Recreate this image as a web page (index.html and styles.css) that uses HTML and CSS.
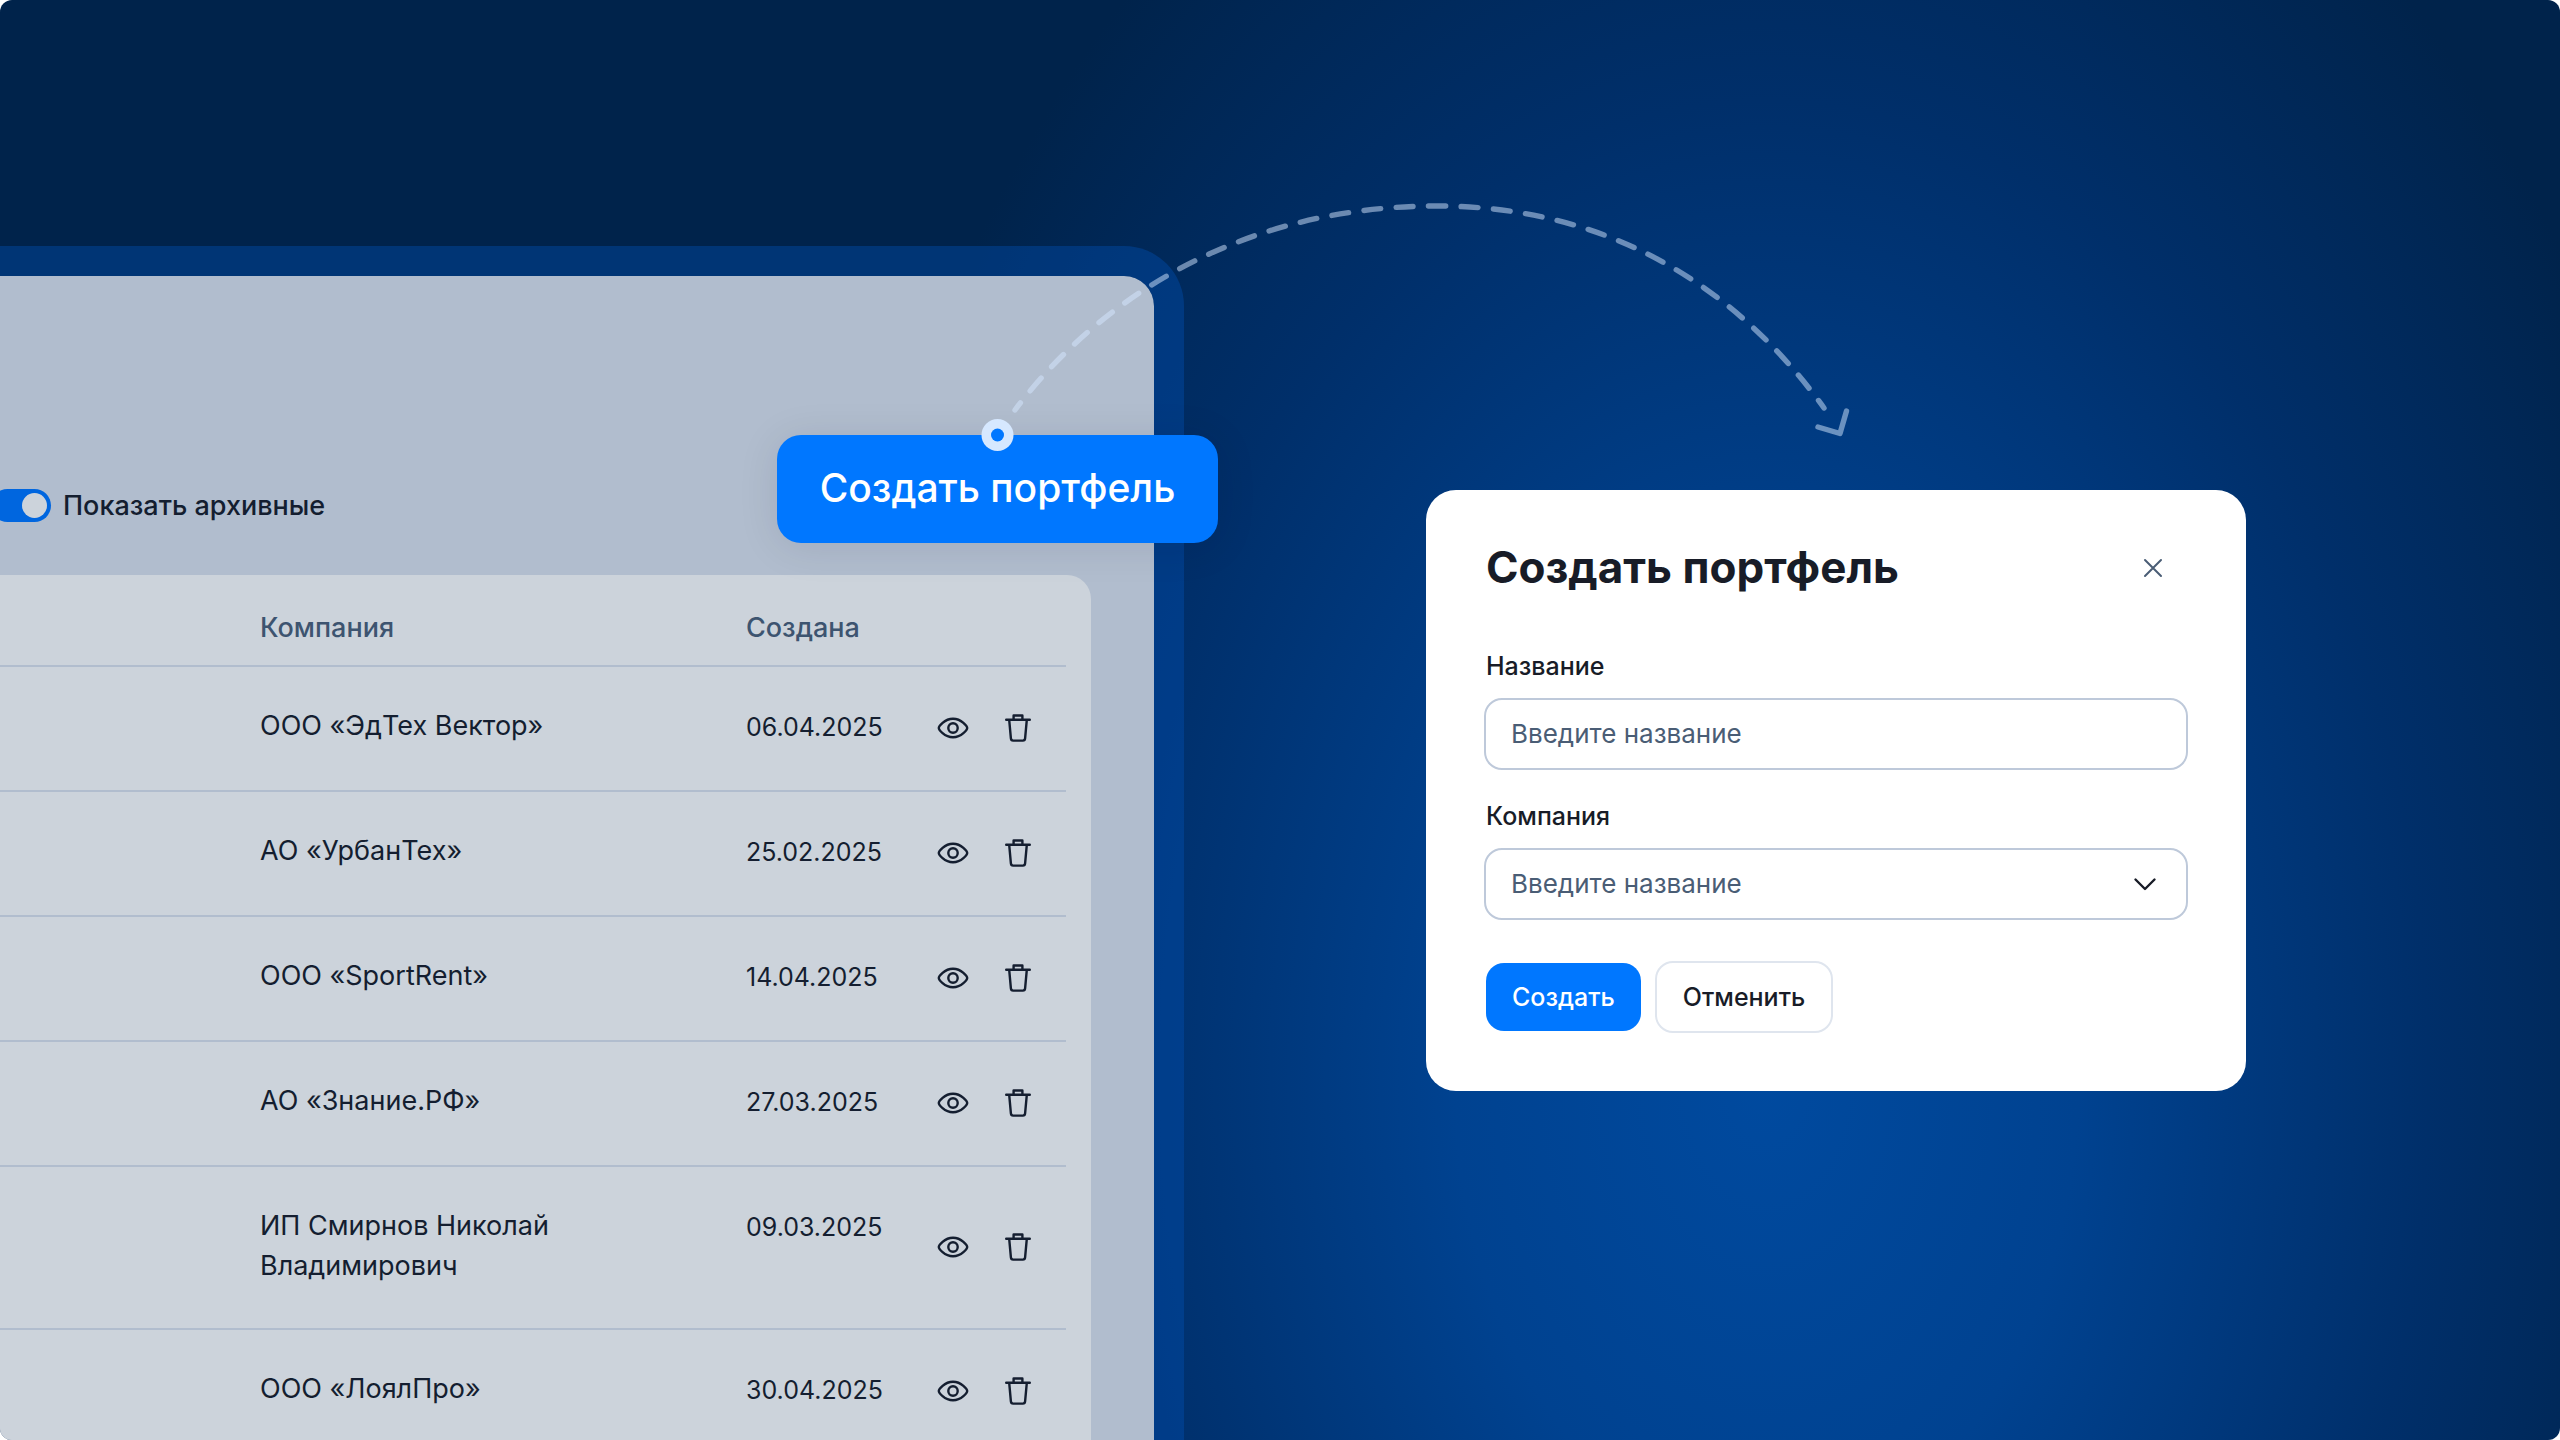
FILE: index.html
```html
<!DOCTYPE html>
<html lang="ru">
<head>
    <meta charset="UTF-8">
    <meta name="viewport" content="width=device-width, initial-scale=1.0">
    <link rel="stylesheet" href="styles.css">

    <title>Создать портфель</title>
</head>
<body>
    <svg class="sprite" aria-hidden="true">
        <symbol id="eye" viewBox="0 0 36 36">
            <path d="M3.8 18C3.8 16.6 9.2 8.7 18 8.7S32.2 16.6 32.2 18 26.8 27.3 18 27.3 3.8 19.4 3.8 18Z"/>
            <circle cx="18" cy="18" r="4.7"/>
        </symbol>
        <symbol id="trash" viewBox="0 0 36 36">
            <path d="M6.2 9.8h23.6M13.6 9.8V5.5h8.8v4.3M9.2 9.8l1.7 18.6q.2 2.2 2.2 2.2h9.8q2 0 2.2-2.2l1.7-18.6"/>
        </symbol>
    </svg>

    <main class="stage">
        <section class="panel">
            <div class="filter">
                <input type="checkbox" class="toggle" id="archived" checked>
                <label for="archived">Показать архивные</label>
            </div>

            <div class="card">
                <table>
                    <thead>
                        <tr>
                            <th></th>
                            <th class="company">Компания</th>
                            <th class="date">Создана</th>
                            <th class="actions"></th>
                        </tr>
                    </thead>
                    <tbody>
                        <tr>
                            <td></td>
                            <td>ООО «ЭдТех Вектор»</td>
                            <td class="date">06.04.2025</td>
                            <td class="actions">
                                <button class="icon" aria-label="Просмотр"><svg><use href="#eye"/></svg></button>
                                <button class="icon" aria-label="Удалить"><svg><use href="#trash"/></svg></button>
                            </td>
                        </tr>
                        <tr>
                            <td></td>
                            <td>АО «УрбанТех»</td>
                            <td class="date">25.02.2025</td>
                            <td class="actions">
                                <button class="icon" aria-label="Просмотр"><svg><use href="#eye"/></svg></button>
                                <button class="icon" aria-label="Удалить"><svg><use href="#trash"/></svg></button>
                            </td>
                        </tr>
                        <tr>
                            <td></td>
                            <td>ООО «SportRent»</td>
                            <td class="date">14.04.2025</td>
                            <td class="actions">
                                <button class="icon" aria-label="Просмотр"><svg><use href="#eye"/></svg></button>
                                <button class="icon" aria-label="Удалить"><svg><use href="#trash"/></svg></button>
                            </td>
                        </tr>
                        <tr>
                            <td></td>
                            <td>АО «Знание.РФ»</td>
                            <td class="date">27.03.2025</td>
                            <td class="actions">
                                <button class="icon" aria-label="Просмотр"><svg><use href="#eye"/></svg></button>
                                <button class="icon" aria-label="Удалить"><svg><use href="#trash"/></svg></button>
                            </td>
                        </tr>
                        <tr>
                            <td></td>
                            <td>ИП Смирнов Николай Владимирович</td>
                            <td class="date">09.03.2025</td>
                            <td class="actions">
                                <button class="icon" aria-label="Просмотр"><svg><use href="#eye"/></svg></button>
                                <button class="icon" aria-label="Удалить"><svg><use href="#trash"/></svg></button>
                            </td>
                        </tr>
                        <tr>
                            <td></td>
                            <td>ООО «ЛоялПро»</td>
                            <td class="date">30.04.2025</td>
                            <td class="actions">
                                <button class="icon" aria-label="Просмотр"><svg><use href="#eye"/></svg></button>
                                <button class="icon" aria-label="Удалить"><svg><use href="#trash"/></svg></button>
                            </td>
                        </tr>
                    </tbody>
                </table>
            </div>

            <div class="callout">
                <button class="cta">Создать портфель</button>
                <svg class="arrow" viewBox="980 190 880 262" aria-hidden="true">
                    <g class="trail">
                        <path pathLength="941" stroke-dasharray="17 15.4" stroke-dashoffset="8" d="M1015 410C1093 306 1234 206 1437 206C1629 206 1751 307 1824 408"/>
                        <path d="M1818 427L1840 433.5L1846.500 411"/>
                    </g>
                    <circle cx="997.500" cy="435" r="16" fill="#d6e8ff"/>
                    <circle cx="997.500" cy="435" r="6.5" fill="#0077ff"/>
                </svg>
            </div>
        </section>

        <section class="side">
            <form class="modal">
                <div class="modal-header">
                    <h1>Создать портфель</h1>
                    <button type="button" class="close" aria-label="Закрыть">
                        <svg viewBox="0 0 36 36"><path d="M10 10l16 16M26 10L10 26"/></svg>
                    </button>
                </div>
                <div class="field">
                    <label for="name">Название</label>
                    <input type="text" id="name" placeholder="Введите название">
                </div>
                <div class="field">
                    <label for="company">Компания</label>
                    <div class="select">
                        <select id="company">
                            <option>Введите название</option>
                        </select>
                        <svg viewBox="0 0 24 24"><path d="M2.500 7.500l9.500 9.500 9.500-9.500"/></svg>
                    </div>
                </div>
                <div class="buttons">
                    <button type="button" class="btn primary">Создать</button>
                    <button type="button" class="btn">Отменить</button>
                </div>
            </form>
        </section>
    </main>
</body>
</html>
```
FILE: styles.css
```css
* {
    box-sizing: border-box;
}

body {
    margin: 0;
    background: white;
    color: #141e30;
    font-family: Inter, sans-serif;
    font-size: 26px;
}

button,
input,
select {
    font: inherit;
    color: inherit;
    margin: 0;
}

button {
    border: none;
    background: none;
    padding: 0;
    cursor: pointer;
}

.sprite {
    display: none;
}

.stage {
    display: flex;
    align-items: flex-start;
    height: 100vh;
    overflow: hidden;
    border-radius: 12px;
    background: radial-gradient(38% 100% at 69% 75%, #004a9f, #004290 32%, #002f6a 68%, #00234b) #00234b;
}

/* left panel */

.panel {
    position: relative;
    flex: 0 0 46.25%;
    height: 100%;
    margin-top: 246px;
    padding-top: 212px;
    border: 30px solid rgba(0, 80, 180, 0.4);
    border-left: none;
    border-bottom: none;
    border-top-right-radius: 60px;
    background: #b1bdce;
    background-clip: padding-box;
}

.filter {
    display: flex;
    align-items: center;
    gap: 12px;
    height: 35px;
    margin-left: -9px;
    font-size: 27px;
    font-weight: 500;
}

.toggle {
    appearance: none;
    display: flex;
    align-items: center;
    justify-content: flex-end;
    width: 60px;
    height: 33px;
    padding-right: 4px;
    border-radius: 17px;
    background: #0066df;
}

.toggle::before {
    content: "";
    width: 25px;
    height: 25px;
    border-radius: 50%;
    background: #ccd3db;
}

.toggle:not(:checked) {
    justify-content: flex-start;
}

.card {
    margin: 52px 63px 0 0;
    padding-right: 25px;
    border-top-right-radius: 24px;
    background: #ccd3db;
}

table {
    width: 100%;
    table-layout: fixed;
    border-spacing: 0;
}

th,
td {
    padding: 39px 0 42px;
    border-bottom: 2px solid #b1bdce;
    text-align: left;
    vertical-align: top;
    font-size: 27px;
    line-height: 40px;
}

th {
    padding: 33px 0 17px;
    color: #3d5470;
    font-weight: 500;
}

td {
    height: 125px;
}

.company {
    width: 486px;
}

td:nth-child(2) {
    padding-right: 160px;
}

.date {
    width: 189px;
}

td.date {
    font-size: 25px;
    line-height: 42px;
    padding-bottom: 40px;
}

.actions {
    width: 131px;
}

td.actions {
    padding: 0 0 2px;
    vertical-align: middle;
    font-size: 0;
    line-height: 0;
}

.icon {
    width: 36px;
    height: 36px;
    margin-right: 29px;
    vertical-align: middle;
}

.icon:last-child {
    margin-right: 0;
}

.icon svg {
    display: block;
    width: 36px;
    height: 36px;
    fill: none;
    stroke: #141e30;
    stroke-width: 2.4;
    stroke-linejoin: round;
    stroke-linecap: round;
}

/* enlarged button with the arrow going to the form */

.callout {
    position: absolute;
    top: 159px;
    right: -64px;
}

.cta {
    display: block;
    width: 441px;
    height: 108px;
    padding-bottom: 4px;
    border-radius: 24px;
    background: #0077ff;
    color: white;
    font-size: 39px;
    font-weight: 500;
    box-shadow: 0 4px 40px rgba(0, 20, 50, 0.1);
}

.arrow {
    position: absolute;
    top: -245px;
    left: 203px;
    width: 880px;
    height: 262px;
    pointer-events: none;
}

.trail {
    fill: none;
    stroke: #d6e8ff;
    stroke-width: 5.4;
    stroke-linecap: round;
    stroke-linejoin: round;
    opacity: 0.5;
}

/* form */

.side {
    flex: 1;
    display: flex;
    justify-content: center;
    padding: 490px 72px 0 0;
}

.modal {
    width: 820px;
    padding: 48px 58px 58px;
    border-radius: 30px;
    background: white;
    color: #181c27;
}

.modal-header {
    display: flex;
    align-items: center;
    justify-content: space-between;
    height: 60px;
    margin-bottom: 50px;
    padding: 0 17px 0 2px;
}

h1 {
    margin: 0;
    padding-bottom: 2px;
    font-size: 44px;
    font-weight: 700;
}

.close svg {
    display: block;
    width: 36px;
    height: 36px;
    fill: none;
    stroke: #4a5d75;
    stroke-width: 2;
    stroke-linecap: round;
}

.field {
    margin-bottom: 28px;
}

.field label {
    display: block;
    margin-bottom: 14px;
    padding-left: 2px;
    line-height: 36px;
    font-size: 25px;
    font-weight: 500;
}

.field input,
.field select {
    display: block;
    appearance: none;
    width: 100%;
    height: 72px;
    padding: 0 25px 2px;
    border: 2px solid #bec9da;
    border-radius: 18px;
    background: white;
    color: #4a5d75;
}

.field input::placeholder {
    color: #4a5d75;
    opacity: 1;
}

.select {
    position: relative;
}

.select svg {
    position: absolute;
    top: 24px;
    right: 31px;
    width: 24px;
    height: 24px;
    fill: none;
    stroke: #181c27;
    stroke-width: 2.4;
    stroke-linecap: round;
    stroke-linejoin: round;
    pointer-events: none;
}

.buttons {
    display: flex;
    align-items: center;
    gap: 14px;
    margin-top: 41px;
    padding-left: 2px;
}

.btn {
    height: 72px;
    padding: 0 26px;
    border: 2px solid #dfe5ee;
    border-radius: 18px;
    font-size: 25px;
    font-weight: 500;
}

.btn.primary {
    height: 68px;
    border: none;
    background: #0077ff;
    color: white;
}
```
